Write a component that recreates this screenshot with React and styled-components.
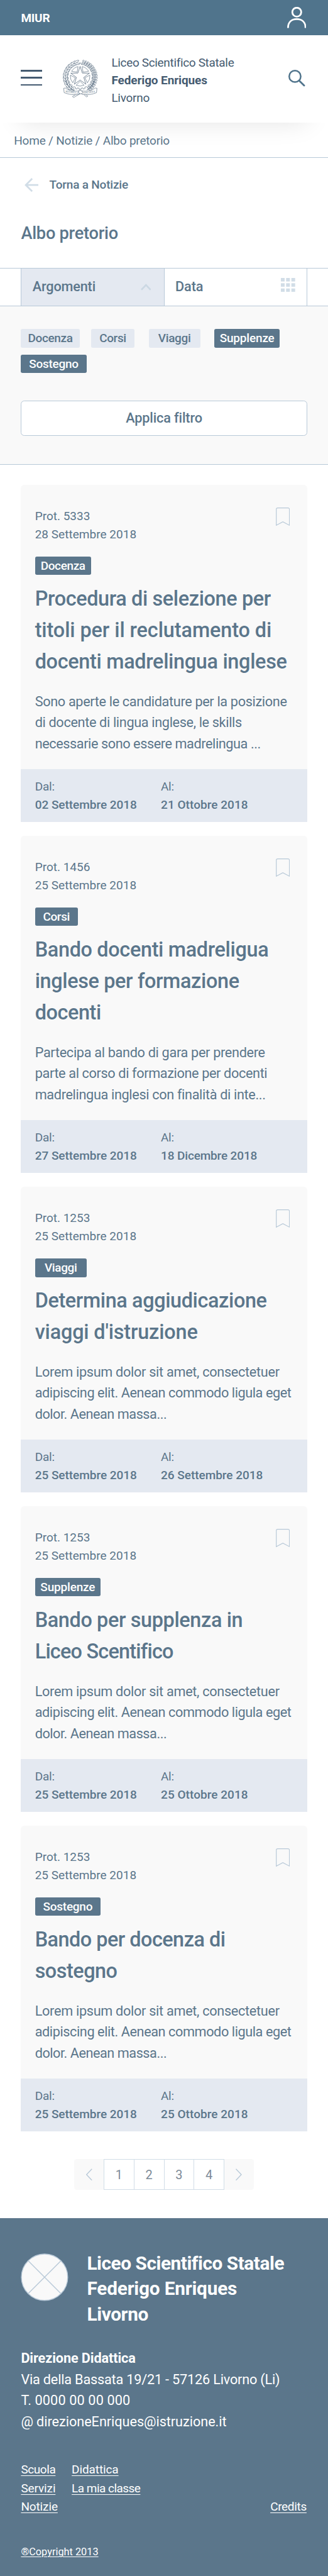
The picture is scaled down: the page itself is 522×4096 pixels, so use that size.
import React from "react";
import styled, { createGlobalStyle } from "styled-components";

// Design units: the layout is specified on a 750-unit wide artboard.
const u = (n) => `${(n * 0.6959).toFixed(3)}px`;

const color = {
  top: "#50748c",
  slate: "#5b768b",
  navy: "#455b71",
  line: "#b8c9d8",
  pale: "#d1dde7",
  tint: "#e4e9f1",
  panel: "#f9f9f9",
};

const GlobalStyle = createGlobalStyle`
  * { box-sizing: border-box; }
  body { margin: 0; background: #fff; font-family: Roboto, "Liberation Sans", sans-serif; color: ${color.slate}; }
  h1, h2, p { margin: 0; }
  svg { display: block; flex: none; }
`;

/* One line of text with its own tracking, in thousandths of a pixel. */
const Line = styled.span`
  display: block;
  white-space: nowrap;
  letter-spacing: ${(p) => (p.$t || 0) / 1000}px;
  font-weight: ${(p) => p.$w || "inherit"};
`;

const Lines = ({ items }) => items.map(([text, t, w]) => <Line key={text} $t={t} $w={w}>{text}</Line>);

const Page = styled.div`
  width: 100%;
  height: 4096px;
  overflow: hidden;
  display: flex;
  flex-direction: column;
`;

const TopBar = styled.div`
  height: ${u(80)};
  flex: none;
  display: flex;
  align-items: center;
  justify-content: space-between;
  padding: 0 ${u(50)} 0 ${u(48)};
  background: ${color.top};
  color: #fff;
  font-size: 19px;
  font-weight: 700;
  ${Line} { padding-top: ${u(3)}; }
`;

const Header = styled.header`
  position: relative;
  z-index: 1;
  flex: none;
  height: ${u(200)};
  display: flex;
  align-items: flex-start;
  padding: 0 ${u(52)} 0 ${u(48)};
  background: #fff;
  box-shadow: 0 ${u(45)} ${u(60)} -${u(48)} rgba(0, 0, 0, 0.12);
`;

const Burger = styled.div`
  width: ${u(48)};
  height: ${u(36)};
  margin-top: ${u(80)};
  display: flex;
  flex-direction: column;
  justify-content: space-between;
`;
const BurgerBar = styled.span`
  height: ${u(4)};
  background: ${color.navy};
`;

const EmblemBox = styled.div`margin: ${u(54)} ${u(31)} 0 ${u(48)};`;

const SchoolName = styled.div`
  flex: 1;
  margin-top: ${u(43.7)};
  font-size: 19px;
  line-height: ${u(40)};
  color: ${color.navy};
`;

const SearchBox = styled.div`margin-top: ${u(80)};`;

const Breadcrumb = styled.nav`
  position: relative;
  z-index: 2;
  flex: none;
  height: ${u(80)};
  display: flex;
  align-items: center;
  padding: ${u(3)} ${u(32)} 0;
  border-bottom: 1.4px solid ${color.line};
  font-size: 19px;
`;

const Intro = styled.section`
  flex: none;
  height: ${u(252)};
  padding: ${u(42.3)} ${u(48)} 0;
`;
const BackLink = styled.div`
  display: flex;
  align-items: center;
  gap: ${u(25)};
  height: ${u(40)};
  padding-left: ${u(8)};
  font-size: 19px;
  line-height: ${u(40)};
  font-weight: 500;
`;
const PageTitle = styled.h1`
  margin-top: ${u(62)};
  font-size: 27.2px;
  line-height: ${u(60)};
  font-weight: 500;
`;

const Tabs = styled.div`
  flex: none;
  height: ${u(88)};
  display: flex;
  padding: 0 ${u(48)};
  border-top: 1.4px solid ${color.line};
  border-bottom: 1.4px solid ${color.line};
`;
const Tab = styled.div`
  flex: 1;
  display: flex;
  align-items: center;
  justify-content: space-between;
  padding: 0 ${u(26)} ${u(2)} ${u(25)};
  border-left: 1.4px solid ${color.line};
  background: ${(p) => (p.$active ? color.tint : "#fff")};
  font-size: 21.7px;
  font-weight: 500;
  &:last-child { border-right: 1.4px solid ${color.line}; }
`;
const TabIcon = styled.span`
  margin-top: ${(p) => (p.$lift ? `-${u(9)}` : u(2))};
  margin-right: ${(p) => (p.$lift ? 0 : u(3))};
`;

const Filters = styled.section`
  flex: none;
  height: ${u(362)};
  padding: ${u(52)} ${u(48)} 0;
  background: ${color.panel};
  border-bottom: 1.4px solid ${color.line};
`;
const ChipRow = styled.div`
  display: flex;
  flex-wrap: wrap;
  row-gap: ${u(16)};
`;
const Chip = styled.span`
  width: ${(p) => u(p.$width)};
  height: ${u(42)};
  margin-right: ${(p) => u(p.$gap || 0)};
  display: flex;
  align-items: center;
  justify-content: center;
  border-radius: ${u(4)};
  background: ${(p) => (p.$on ? color.slate : color.tint)};
  color: ${(p) => (p.$on ? "#fff" : color.slate)};
  font-size: 19px;
  font-weight: 500;
`;
const ApplyButton = styled.button`
  width: 100%;
  height: ${u(80)};
  margin-top: ${u(64)};
  display: flex;
  align-items: center;
  justify-content: center;
  padding: 0 0 ${u(2)};
  border: 1.4px solid ${color.line};
  border-radius: ${u(8)};
  background: #fff;
  color: ${color.slate};
  font: 500 21.7px Roboto, "Liberation Sans", sans-serif;
`;

const List = styled.main`
  flex: none;
  display: flex;
  flex-direction: column;
  gap: ${u(32)};
  padding: ${u(46)} ${u(48)} 0;
`;
const Card = styled.article`
  border-radius: ${u(8)} ${u(8)} 0 0;
  background: ${color.panel};
`;
const CardBody = styled.div`padding: ${u(49.7)} ${u(40)} ${u(34.7)} ${u(32)};`;
const CardTop = styled.div`
  display: flex;
  justify-content: space-between;
  height: ${u(84)};
  margin-bottom: ${u(30.3)};
  font-size: 19px;
  line-height: ${u(42)};
`;
const BookmarkBox = styled.div`margin-top: ${u(2.3)};`;
const CardTitle = styled.h2`
  margin-top: ${u(18.1)};
  font-size: 32.4px;
  line-height: ${u(72)};
  font-weight: 500;
`;
const Excerpt = styled.p`
  margin-top: ${u(31.2)};
  font-size: 21.7px;
  line-height: ${u(48)};
`;
const Period = styled.footer`
  height: ${u(120)};
  display: grid;
  grid-template-columns: ${u(288)} 1fr;
  padding: ${u(17.7)} ${u(32)} 0;
  background: ${color.tint};
  font-size: 19px;
  line-height: ${u(42)};
`;

const Pager = styled.nav`
  flex: none;
  align-self: center;
  display: flex;
  width: ${u(410)};
  height: ${u(70)};
  margin: ${u(64)} 0;
`;
const PageCell = styled.span`
  flex: 1;
  display: flex;
  align-items: center;
  justify-content: center;
  padding-top: ${u(2)};
  border: 1.4px solid ${color.pale};
  border-right-width: 0;
  font-size: 20px;
  color: #7d8b98;
  &:nth-last-child(2) { border-right-width: 1.4px; }
`;
const PageArrow = styled.span`
  flex: 1;
  display: flex;
  align-items: center;
  justify-content: center;
  background: ${color.panel};
  border-radius: ${(p) => (p.$next ? `0 ${u(6)} ${u(6)} 0` : `${u(6)} 0 0 ${u(6)}`)};
`;

const Footer = styled.footer`
  flex: 1;
  padding: ${u(75.4)} ${u(49)} 0 ${u(48)};
  background: ${color.slate};
  color: #fff;
`;
const FooterHead = styled.div`
  display: flex;
  gap: ${u(42)};
  svg { margin-top: ${u(5.6)}; }
`;
const FooterName = styled.div`
  font-size: 29.8px;
  line-height: ${u(58)};
  font-weight: 700;
`;
const Address = styled.div`
  margin-top: ${u(47.9)};
  font-size: 21.7px;
  line-height: ${u(48)};
`;
const FooterLinks = styled.div`
  display: grid;
  grid-template-columns: ${u(116)} 1fr auto;
  margin-top: ${u(65)};
  font-size: 19px;
  line-height: ${u(42)};
  text-decoration: underline;
  text-decoration-thickness: 1px;
  text-underline-offset: 2.5px;
`;
const LinkColumn = styled.div`
  align-self: ${(p) => (p.$end ? "end" : "start")};
`;
const Copyright = styled.p`
  margin-top: ${u(63.6)};
  font-size: 16.3px;
  line-height: ${u(40)};
  text-decoration: underline;
  text-decoration-thickness: 1px;
  text-underline-offset: 2px;
`;

const Svg = ({ w, h, children, ...rest }) => (
  <svg width={w * 0.6959} height={h * 0.6959} viewBox={`0 0 ${w} ${h}`} fill="none" {...rest}>{children}</svg>
);

const polar = (cx, cy, r, deg) => {
  const a = ((deg - 90) * Math.PI) / 180;
  return [cx + r * Math.cos(a), cy + r * Math.sin(a)];
};
const CX = 39.5;
const CY = 40.5;
const starPoints = Array.from({ length: 10 }, (_, i) => polar(CX, CY, i % 2 ? 8.8 : 22.5, i * 36).join(",")).join(" ");
const gearPoints = Array.from({ length: 20 }, (_, i) => {
  const a = i * 18;
  return [[27.5, a - 4.6], [30.3, a - 4], [30.3, a + 4], [27.5, a + 4.6]].map(([r, d]) => polar(CX, CY, r, d).join(",")).join(" ");
}).join(" ");
const wedge = (deg) => {
  const [ax, ay] = polar(CX, CY, 11.5, deg);
  const [bx, by] = polar(CX, CY, 22.5, deg - 24);
  const [dx, dy] = polar(CX, CY, 22.5, deg + 24);
  return `M${ax} ${ay}L${bx} ${by}A22.5 22.5 0 0 1 ${dx} ${dy}Z`;
};

function Emblem() {
  const laurel = [];
  for (let a = 214; a <= 346; a += 12) {
    [[31.5, 20], [36, -16]].forEach(([r, tilt]) => {
      const [x, y] = polar(CX, CY + 2, r, a);
      laurel.push(<ellipse key={`${a}-${r}`} cx={x} cy={y} rx="6.6" ry="2" transform={`rotate(${a + tilt} ${x} ${y})`} />);
    });
  }
  const oak = [];
  for (let a = 14; a <= 146; a += 9) {
    [[31, -28], [34, 0], [37, 30]].forEach(([r, tilt]) => {
      const [x, y] = polar(CX, CY + 2, r, a);
      oak.push(<ellipse key={`${a}-${r}`} cx={x} cy={y} rx="3.6" ry="1.7" transform={`rotate(${a + tilt} ${x} ${y})`} />);
    });
  }
  return (
    <Svg w={80} h={90} stroke={color.navy} strokeWidth="0.85">
      <polygon points={gearPoints} />
      {[36, 108, 180, 252, 324].map((d) => <path key={d} d={wedge(d)} />)}
      <polygon points={starPoints} fill="#fff" strokeWidth="1" />
      <g strokeWidth="0.8" fill="#fff">{laurel}{oak}</g>
      <path d="M7 50C8 60 16 68 24 72M72 50C70 60 62 68 55 72" strokeWidth="1.3" />
      <path fill="#fff" d="M36 78L22 87L25 89L42 79ZM44 78L54 88L57 86L46 77Z" />
      <path fill="#fff" d="M2 68L6 67.5C14 74 26 76 38 74L37 82C26 84 12 82 3 78ZM78 68L74 67.5C66 74 56 76 43 74L44 82C55 84 68 82 77 78Z" />
      <path fill="#fff" strokeWidth="1" d="M36 74C40 71 44 74 46 78C43 82 38 81 36 78Z" />
      <g fill={color.navy} stroke="none" fontSize="6" fontFamily="Liberation Serif, serif">
        <text x="6" y="77" textLength="29" lengthAdjust="spacingAndGlyphs" transform="rotate(8 6 77)">REPVBBLICA</text>
        <text x="47" y="81" textLength="27" lengthAdjust="spacingAndGlyphs" transform="rotate(-8 47 81)">ITALIANA</text>
      </g>
    </Svg>
  );
}

const UserIcon = () => (
  <Svg w={44} h={48} stroke="#fff" strokeWidth="4">
    <circle cx="22" cy="12" r="10.2" />
    <path d="M2 48C2 35 10 28 22 28S42 35 42 48" />
  </Svg>
);
const SearchIcon = () => (
  <Svg w={38} h={38} stroke={color.top} strokeWidth="3.6" strokeLinecap="round">
    <circle cx="15" cy="15" r="13.2" />
    <path d="M25 25L36 36" strokeWidth="4" />
  </Svg>
);
const BackArrow = () => (
  <Svg w={32} h={32} stroke={color.pale} strokeWidth="4">
    <path d="M17.5 1.5L3 16L17.5 30.5M3 16H32" />
  </Svg>
);
const Chevron = () => (
  <Svg w={24} h={16} stroke="#cbd8e3" strokeWidth="3.8">
    <path d="M1.5 14L12 3L22.5 14" />
  </Svg>
);
const GridIcon = () => (
  <Svg w={33} h={32}>
    {[0, 12, 24].map((y) => [0, 12, 24].map((x) => <rect key={`${x}-${y}`} x={x} y={y} width="8.6" height="8" fill={color.pale} />))}
  </Svg>
);
const Bookmark = () => (
  <Svg w={32} h={42} stroke={color.line} strokeWidth="1.7">
    <path d="M1 40.5V4Q1 1 4 1H28Q31 1 31 4V40.5L16 32.5Z" />
  </Svg>
);
const PagerIcon = ({ next }) => (
  <Svg w={14} h={28} stroke={color.line} strokeWidth="2">
    <path d={next ? "M0.7 1L13 14L0.7 27" : "M13.3 1L1 14L13.3 27"} />
  </Svg>
);
const LogoPlaceholder = () => (
  <Svg w={109} h={109} stroke={color.line} strokeWidth="2">
    <circle cx="54.5" cy="54.5" r="53" fill={color.panel} />
    <path d="M17 17L92 92M92 17L17 92" />
  </Svg>
);

const loremExcerpt = [
  ["Lorem ipsum dolor sit amet, consectetuer", -306],
  ["adipiscing elit. Aenean commodo ligula eget", -425],
  ["dolor. Aenean massa...", -469],
];

const notices = [
  {
    prot: "Prot. 5333", date: "28 Settembre 2018", tag: "Docenza", tagT: -380, tagWidth: 128,
    title: [["Procedura di selezione per", -361], ["titoli per il reclutamento di", -81], ["docenti madrelingua inglese", -305]],
    text: [["Sono aperte le candidature per la posizione", -350], ["di docente di lingua inglese, le skills", -351], ["necessarie sono essere madrelingua ...", -428]],
    from: "02 Settembre 2018", to: "21 Ottobre 2018", toT: 38,
  },
  {
    prot: "Prot. 1456", date: "25 Settembre 2018", tag: "Corsi", tagT: -413, tagWidth: 98,
    title: [["Bando docenti madreligua", -322], ["inglese per formazione", -345], ["docenti", -409]],
    text: [["Partecipa al bando di gara per prendere", -324], ["parte al corso di formazione per docenti", -378], ["madrelingua inglesi con finalità di inte...", -350]],
    from: "27 Settembre 2018", to: "18 Dicembre 2018", toT: -150,
  },
  {
    prot: "Prot. 1253", date: "25 Settembre 2018", tag: "Viaggi", tagT: -372, tagWidth: 118,
    title: [["Determina aggiudicazione", -369], ["viaggi d'istruzione", -161]],
    text: loremExcerpt, from: "25 Settembre 2018", to: "26 Settembre 2018", toT: -31,
  },
  {
    prot: "Prot. 1253", date: "25 Settembre 2018", tag: "Supplenze", tagT: -179, tagWidth: 150,
    title: [["Bando per supplenza in", -359], ["Liceo Scentifico", -260]],
    text: loremExcerpt, from: "25 Settembre 2018", to: "25 Ottobre 2018", toT: 38,
  },
  {
    prot: "Prot. 1253", date: "25 Settembre 2018", tag: "Sostegno", tagT: -256, tagWidth: 150,
    title: [["Bando per docenza di", -507], ["sostegno", -472]],
    text: loremExcerpt, from: "25 Settembre 2018", to: "25 Ottobre 2018", toT: 38,
  },
];
notices[3].title[1][1] = -772;

const chips = [
  { label: "Docenza", t: -380, width: 134, gap: 26 },
  { label: "Corsi", t: -413, width: 100, gap: 32 },
  { label: "Viaggi", t: -372, width: 118, gap: 32 },
  { label: "Supplenze", t: -179, width: 150, on: true },
  { label: "Sostegno", t: -256, width: 150, on: true },
];

function Notice({ item }) {
  return (
    <Card>
      <CardBody>
        <CardTop>
          <div><Lines items={[[item.prot, -3], [item.date, 26]]} /></div>
          <BookmarkBox><Bookmark /></BookmarkBox>
        </CardTop>
        <Chip $on $width={item.tagWidth}><Line $t={item.tagT}>{item.tag}</Line></Chip>
        <CardTitle><Lines items={item.title} /></CardTitle>
        <Excerpt><Lines items={item.text} /></Excerpt>
      </CardBody>
      <Period>
        <div><Lines items={[["Dal:", -176], [item.from, -31, 500]]} /></div>
        <div><Lines items={[["Al:", -350], [item.to, item.toT, 500]]} /></div>
      </Period>
    </Card>
  );
}

export default function App() {
  return (
    <Page>
      <GlobalStyle />
      <TopBar><Line $t={-238}>MIUR</Line><UserIcon /></TopBar>
      <Header>
        <Burger><BurgerBar /><BurgerBar /><BurgerBar /></Burger>
        <EmblemBox><Emblem /></EmblemBox>
        <SchoolName>
          <Lines items={[["Liceo Scientifico Statale", -340], ["Federigo Enriques", -119, 700], ["Livorno", -270]]} />
        </SchoolName>
        <SearchBox><SearchIcon /></SearchBox>
      </Header>
      <Breadcrumb><Line $t={-210}>Home / Notizie / Albo pretorio</Line></Breadcrumb>
      <Intro>
        <BackLink><BackArrow /><Line $t={-201}>Torna a Notizie</Line></BackLink>
        <PageTitle><Line $t={-249}>Albo pretorio</Line></PageTitle>
      </Intro>
      <Tabs>
        <Tab $active><Line $t={-173}>Argomenti</Line><TabIcon><Chevron /></TabIcon></Tab>
        <Tab><Line $t={-55}>Data</Line><TabIcon $lift><GridIcon /></TabIcon></Tab>
      </Tabs>
      <Filters>
        <ChipRow>
          {chips.map((c) => (
            <Chip key={c.label} $width={c.width} $gap={c.gap} $on={c.on}><Line $t={c.t}>{c.label}</Line></Chip>
          ))}
        </ChipRow>
        <ApplyButton><Line $t={-146}>Applica filtro</Line></ApplyButton>
      </Filters>
      <List>{notices.map((n) => <Notice key={n.tag} item={n} />)}</List>
      <Pager>
        <PageArrow><PagerIcon /></PageArrow>
        {[1, 2, 3, 4].map((n) => <PageCell key={n}>{n}</PageCell>)}
        <PageArrow $next><PagerIcon next /></PageArrow>
      </Pager>
      <Footer>
        <FooterHead>
          <LogoPlaceholder />
          <FooterName>
            <Lines items={[["Liceo Scientifico Statale", -459], ["Federigo Enriques", -204], ["Livorno", -384]]} />
          </FooterName>
        </FooterHead>
        <Address>
          <Lines items={[
            ["Direzione Didattica", -115, 700],
            ["Via della Bassata 19/21 - 57126 Livorno (Li)", -202],
            ["T. 0000 00 00 000", 121],
            ["@ direzioneEnriques@istruzione.it", -60],
          ]} />
        </Address>
        <FooterLinks>
          <LinkColumn><Lines items={[["Scuola", -418], ["Servizi", -121], ["Notizie", -126]]} /></LinkColumn>
          <LinkColumn><Lines items={[["Didattica", -111], ["La mia classe", -533]]} /></LinkColumn>
          <LinkColumn $end><Line $t={-328}>Credits</Line></LinkColumn>
        </FooterLinks>
        <Copyright><Line $t={13}>®Copyright 2013</Line></Copyright>
      </Footer>
    </Page>
  );
}
